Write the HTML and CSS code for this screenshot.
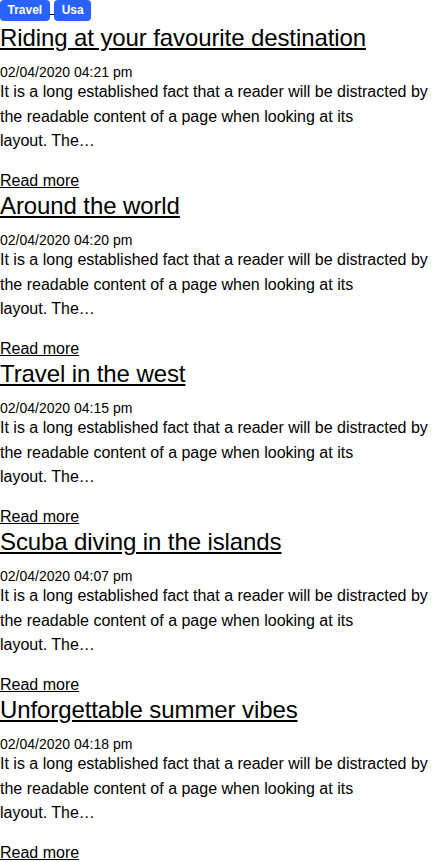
FILE: index.html
```html
<!DOCTYPE html>
<html lang="en">
<head>
<meta charset="utf-8">
<title>Blog</title>
<link rel="stylesheet" href="styles.css">
</head>
<body>
<main class="posts">
  <article class="post">
    <div class="tags"><a href="#" class="tag-link"><span class="badge">Travel</span> </a><a href="#" class="tag-link"><span class="badge">Usa</span></a></div>
    <h2 class="title"><a href="#">Riding at your favourite destination</a></h2>
    <div class="date">02/04/2020 04:21 pm</div>
    <p class="excerpt">It is a long established fact that a reader will be distracted by the readable content of a page when looking at its<br>layout. The…</p>
    <a href="#" class="more">Read more</a>
  </article>
  <article class="post">
    <h2 class="title"><a href="#">Around the world</a></h2>
    <div class="date">02/04/2020 04:20 pm</div>
    <p class="excerpt">It is a long established fact that a reader will be distracted by the readable content of a page when looking at its<br>layout. The…</p>
    <a href="#" class="more">Read more</a>
  </article>
  <article class="post">
    <h2 class="title"><a href="#">Travel in the west</a></h2>
    <div class="date">02/04/2020 04:15 pm</div>
    <p class="excerpt">It is a long established fact that a reader will be distracted by the readable content of a page when looking at its<br>layout. The…</p>
    <a href="#" class="more">Read more</a>
  </article>
  <article class="post">
    <h2 class="title"><a href="#">Scuba diving in the islands</a></h2>
    <div class="date">02/04/2020 04:07 pm</div>
    <p class="excerpt">It is a long established fact that a reader will be distracted by the readable content of a page when looking at its<br>layout. The…</p>
    <a href="#" class="more">Read more</a>
  </article>
  <article class="post">
    <h2 class="title"><a href="#">Unforgettable summer vibes</a></h2>
    <div class="date">02/04/2020 04:18 pm</div>
    <p class="excerpt">It is a long established fact that a reader will be distracted by the readable content of a page when looking at its<br>layout. The…</p>
    <a href="#" class="more">Read more</a>
  </article>
</main>
</body>
</html>
```

FILE: styles.css
```css
html, body {
  margin: 0;
  padding: 0;
  background: #fff;
}

body {
  font-family: "Liberation Sans", Arial, Helvetica, sans-serif;
  font-size: 16px;
  color: #000;
}

a {
  color: #000;
  text-decoration: underline;
}

.posts {
  display: flex;
  flex-direction: column;
  gap: 2.6px;
}

.post {
  display: flex;
  flex-direction: column;
  align-items: flex-start;
}

.tags {
  height: 24px;
  line-height: 16px;
}

.badge {
  display: inline-block;
  vertical-align: top;
  background: #2962ff;
  color: #fff;
  font-weight: bold;
  font-size: 12px;
  line-height: 15px;
  padding: 3px 7.5px;
  border-radius: 4px;
}

.title {
  margin: 0;
  font-size: 24px;
  font-weight: normal;
  line-height: 28px;
  letter-spacing: -0.1px;
}

.date {
  margin-top: 12px;
  font-size: 14px;
  line-height: 16px;
}

.excerpt {
  margin: 0 0 18px;
  line-height: 24.5px;
}

.more {
  line-height: normal;
}
```
